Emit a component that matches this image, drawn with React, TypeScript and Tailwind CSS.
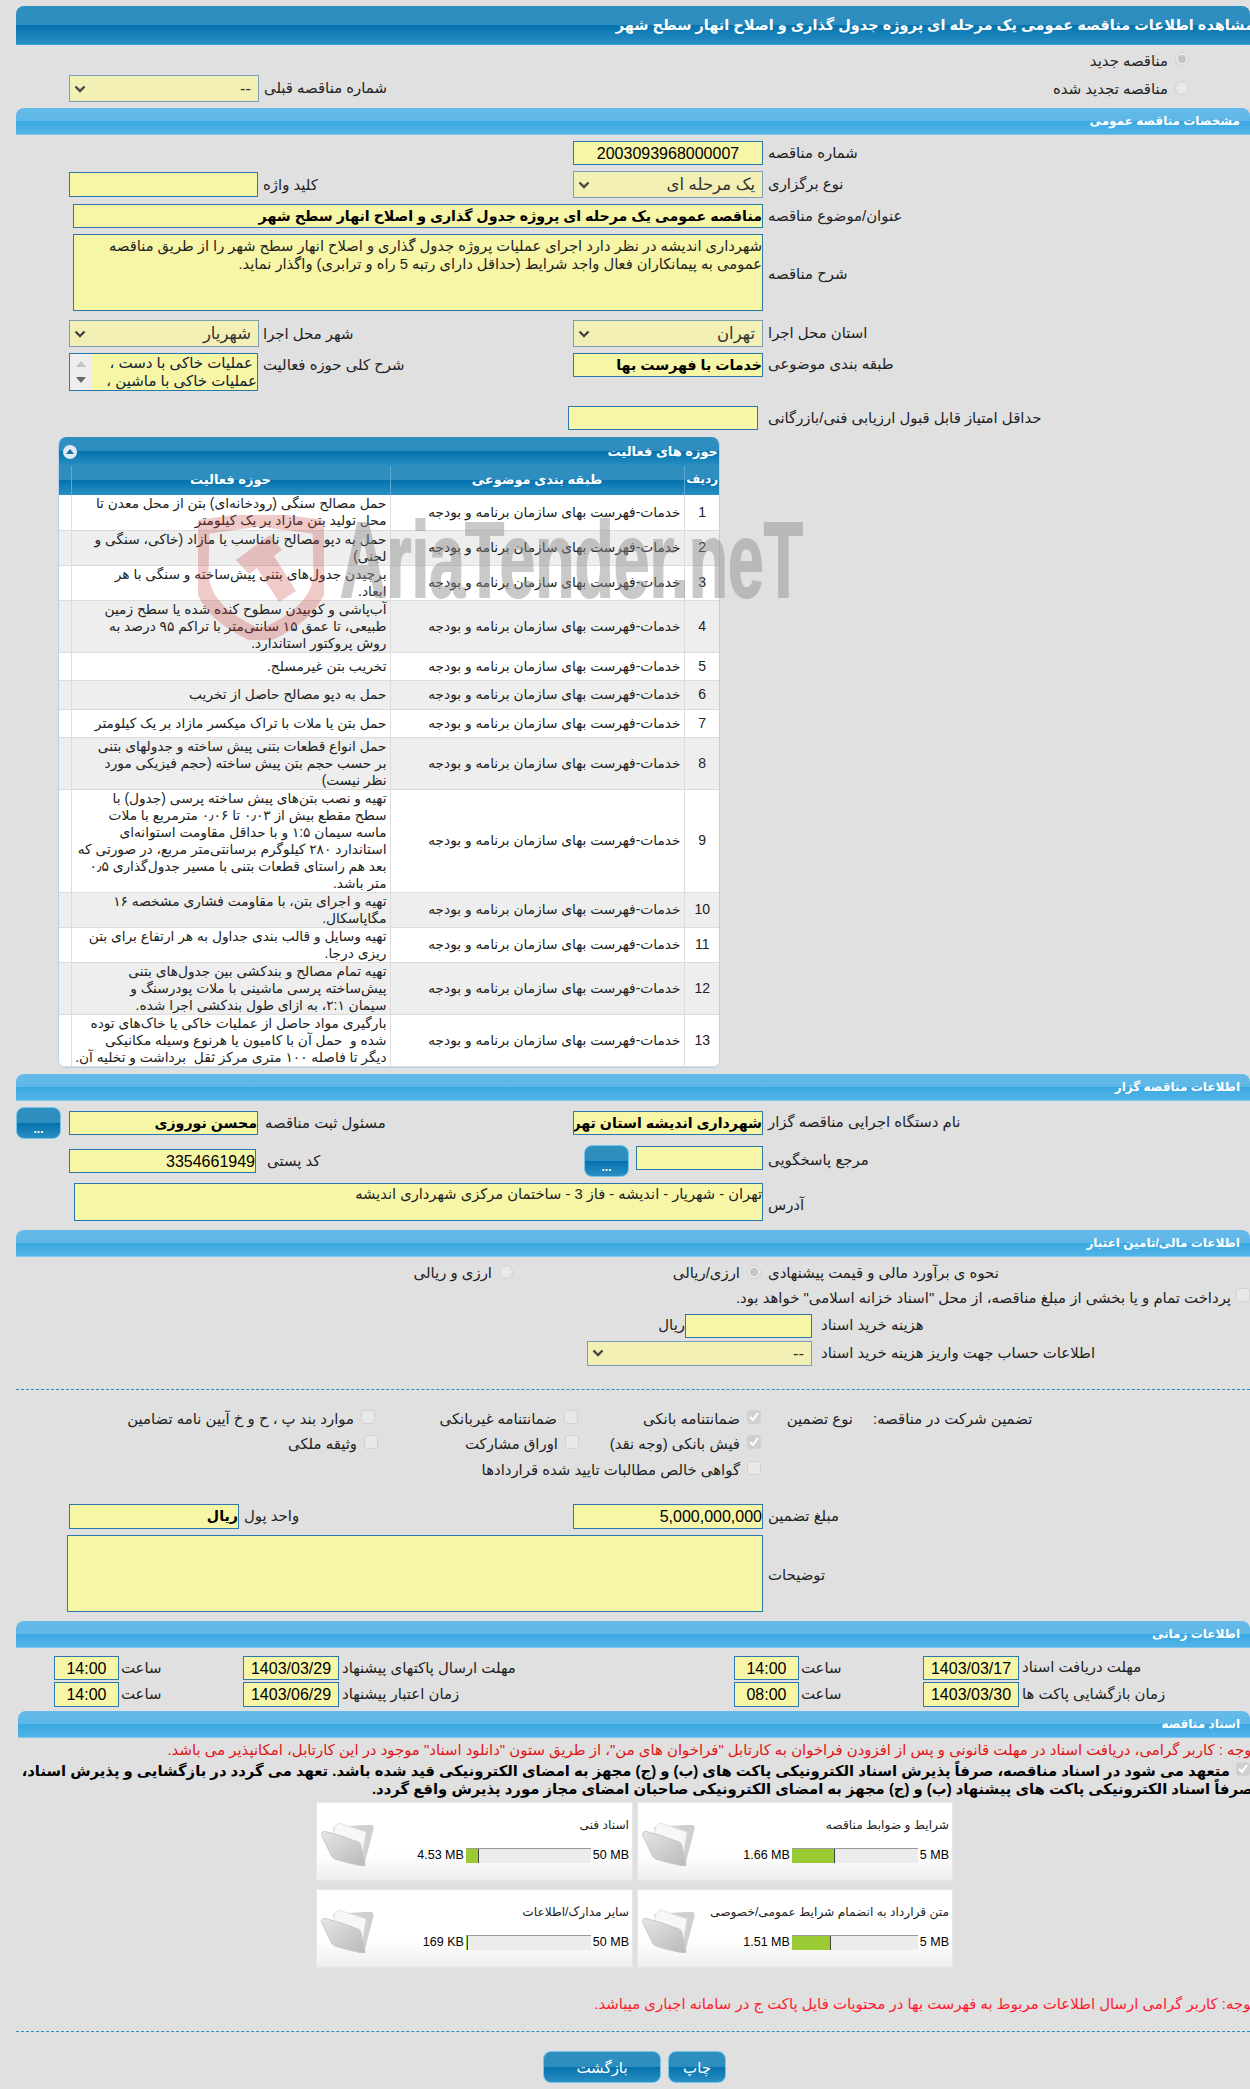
import type { ReactNode } from "react";

type ActivityRow = { id: number; lines: string[]; height: string };

const activityRows: ActivityRow[] = [
  { id: 1, height: "h-[35px]", lines: ["حمل مصالح سنگی (رودخانه‌ای) بتن از محل معدن تا", "محل تولید بتن مازاد بر یک کیلومتر"] },
  { id: 2, height: "h-[35px]", lines: ["حمل به دپو مصالح نامناسب یا مازاد (خاکی، سنگی و", "لجنی)"] },
  { id: 3, height: "h-[35px]", lines: ["برچیدن جدول‌های بتنی پیش‌ساخته و سنگی با هر", "ابعاد."] },
  { id: 4, height: "h-[52px]", lines: ["آب‌پاشی و کوبیدن سطوح کنده شده یا سطح زمین", "طبیعی، تا عمق ۱۵ سانتی‌متر با تراکم ۹۵ درصد به", "روش پروکتور استاندارد."] },
  { id: 5, height: "h-[28px]", lines: ["تخریب بتن غیرمسلح."] },
  { id: 6, height: "h-[29px]", lines: ["حمل به دپو مصالح حاصل از تخریب"] },
  { id: 7, height: "h-[28px]", lines: ["حمل بتن یا ملات با تراک میکسر مازاد بر یک کیلومتر"] },
  { id: 8, height: "h-[52px]", lines: ["حمل انواع قطعات بتنی پیش ساخته و جدولهای بتنی", "بر حسب حجم بتن پیش ساخته (حجم فیزیکی مورد", "نظر نیست)"] },
  { id: 9, height: "h-[103px]", lines: ["تهیه و نصب بتن‌های پیش ساخته پرسی (جدول) با", "سطح مقطع بیش از ۰٫۰۳ تا ۰٫۰۶ مترمربع با ملات", "ماسه سیمان ۱:۵ و با حداقل مقاومت استوانه‌ای", "استاندارد ۲۸۰ کیلوگرم برسانتی‌متر مربع، در صورتی که", "بعد هم راستای قطعات بتنی با مسیر جدول‌گذاری ۰٫۵", "متر باشد."] },
  { id: 10, height: "h-[35px]", lines: ["تهیه و اجرای بتن، با مقاومت فشاری مشخصه ۱۶", "مگاپاسکال."] },
  { id: 11, height: "h-[35px]", lines: ["تهیه وسایل و قالب بندی جداول به هر ارتفاع برای بتن", "ریزی درجا."] },
  { id: 12, height: "h-[52px]", lines: ["تهیه تمام مصالح و بندکشی بین جدول‌های بتنی", "پیش‌ساخته پرسی ماشینی با ملات پودرسنگ و", "سیمان ۲:۱، به ازای طول بندکشی اجرا شده."] },
  { id: 13, height: "h-[52px]", lines: ["بارگیری مواد حاصل از عملیات خاکی یا خاک‌های توده", "شده و  حمل آن با کامیون یا هرنوع وسیله مکانیکی", "دیگر تا فاصله ۱۰۰ متری مرکز ثقل  برداشت و تخلیه آن."] },
];

const lightBar = "bg-[linear-gradient(to_bottom,#64bbe9_0%,#5eb7e8_50%,#3aa8e2_50%,#52b4e7_100%)]";
const darkBar = "bg-[linear-gradient(to_bottom,#2f90c0_0%,#2c8dbe_50%,#0472ad_50%,#2a8fc4_100%)]";

function SectionBar({ title, className = "ml-4" }: { title: string; className?: string }) {
  return (
    <div dir="rtl" className={`${lightBar} ${className} h-[27px] rounded-t-[8px] border-b border-[#7cc8ef] pr-[10px] text-[12px] leading-[27px] font-bold text-white`}>
      {title}
    </div>
  );
}

function Field({ size, bold, center, children }: { size: string; bold?: boolean; center?: boolean; children?: ReactNode }) {
  return (
    <div
      dir="rtl"
      className={`${size} shrink-0 overflow-hidden border border-[#2a78ad] bg-[#f7f5a6] whitespace-nowrap text-black ${bold ? "text-[14.2px] leading-[23px] font-bold" : "text-[16px] leading-[24px]"} ${center ? "text-center" : "text-right"}`}
    >
      {children}
    </div>
  );
}

function SelectBox({ size, value }: { size: string; value?: string }) {
  return (
    <div dir="rtl" className={`${size} flex shrink-0 items-center justify-between border border-[#7d9db5] bg-[#f2f0b5] pr-[7px] pl-[4px] text-[16.5px] text-[#333]`}>
      <span>{value}</span>
      <svg width="12" height="8" viewBox="0 0 12 8" fill="none" stroke="#444" strokeWidth="2.4">
        <path d="M1.5 1.5 6 6l4.5-4.5" />
      </svg>
    </div>
  );
}

function Label({ children, className = "" }: { children: ReactNode; className?: string }) {
  return (
    <span dir="rtl" className={`${className} text-[14.9px] whitespace-nowrap text-[#222]`}>
      {children}
    </span>
  );
}

function Radio({ checked }: { checked?: boolean }) {
  return (
    <span className="ml-[3px] flex h-[14px] w-[14px] shrink-0 items-center justify-center rounded-full border border-[#cfcfcf] bg-[#e9e9e9]">
      {checked && <span className="h-[8px] w-[8px] rounded-full bg-[#c4c4c4]" />}
    </span>
  );
}

function Check({ checked }: { checked?: boolean }) {
  return (
    <span className={`ml-[3px] flex h-[14px] w-[14px] shrink-0 items-center justify-center rounded-[3px] border border-[#d2d2d2] ${checked ? "bg-[#d0d0d0]" : "bg-[#e8e8e8]"}`}>
      {checked && (
        <svg width="10" height="9" viewBox="0 0 10 9" fill="none" stroke="#fff" strokeWidth="2">
          <path d="M1 5l3 3 5-7" />
        </svg>
      )}
    </span>
  );
}

function CheckItem({ size, text, checked }: { size: string; text: string; checked?: boolean }) {
  return (
    <div className={`${size} flex shrink-0 items-start justify-end`}>
      <Label className="mt-[1px] mr-[4px] leading-[16px]">{text}</Label>
      <Check checked={checked} />
    </div>
  );
}

function BlueButton({ size, children }: { size: string; children: ReactNode }) {
  return (
    <div className={`${size} ${darkBar} flex shrink-0 items-end justify-center rounded-[8px] border border-[#76c6ea] pb-[4px] text-white`}>
      {children}
    </div>
  );
}

function FolderIcon() {
  return (
    <svg width="54" height="46" viewBox="0 0 54 46" className="mt-[17px] ml-[4px] shrink-0">
      <defs>
        <linearGradient id="folderFront" x1="0" y1="0" x2="1" y2="1">
          <stop offset="0" stopColor="#e6e6e6" />
          <stop offset="1" stopColor="#b9b9b9" />
        </linearGradient>
      </defs>
      <path d="M12 7 44 5 51 5c2 1 2 3 1 6L44 42 14 18Z" fill="#cfcfcf" />
      <path d="M13 9c2-5 5-7 8-5l24 8-4 24L13 18Z" fill="#f7f7f7" stroke="#e2e2e2" />
      <path d="M1 13c1-2 3-2 5-1l11 3c7 2 14 5 20 7 2 1 3 2 3 4l4 18c0 2-1 3-3 2-9-2-18-4-27-7-2-1-3-2-4-4L1 16c-1-1-1-2 0-3Z" fill="url(#folderFront)" stroke="#c8c8c8" />
    </svg>
  );
}

function DocCard({ title, value, max, fill, barWidth }: { title: string; value: string; max: string; fill: string; barWidth: string }) {
  return (
    <div className="flex h-[79px] border border-[#e6e6e6] bg-[linear-gradient(to_bottom,#ffffff_0%,#ffffff_65%,#eeeeee_100%)]">
      <FolderIcon />
      <div className="flex min-w-0 flex-1 flex-col">
        <div dir="rtl" className="mt-[13px] h-[18px] pr-[3px] text-[12.2px] leading-[18px] whitespace-nowrap text-[#222]">
          {title}
        </div>
        <div className="mt-[14px] flex items-center justify-end gap-[2px] pr-[3px] text-[12.5px] leading-[15px] text-black">
          <span className="[font-family:'Liberation_Sans',sans-serif] whitespace-nowrap">{value}</span>
          <div className={`${barWidth} flex h-[15px] shrink-0 border-t border-[#999] bg-[#ececec]`}>
            <div className={`${fill} h-full border-r border-[#444] bg-[#9acb34]`} />
          </div>
          <span className="[font-family:'Liberation_Sans',sans-serif] whitespace-nowrap">{max}</span>
        </div>
      </div>
    </div>
  );
}

function Watermark() {
  return (
    <div className="pointer-events-none absolute top-[515px] left-[198px] flex h-[125px] w-[610px]">
      <svg width="126" height="125" viewBox="0 0 126 125" fill="none" className="shrink-0">
        <path d="M4 12 62 4l60 8 1 50c-3 28-30 48-61 60C30 108 5 90 3 60Z" stroke="#c83c3c" strokeOpacity="0.28" strokeWidth="15" />
        <path d="M38 45 72 20l12 15-8 6 22 35-17 11-22-34-8 6Z" fill="#c83c3c" fillOpacity="0.28" />
      </svg>
      <span className="mt-[-18px] ml-[16px] origin-left scale-x-[0.595] text-[108px] leading-[125px] font-bold whitespace-nowrap text-[#8a8a8a] opacity-45 [-webkit-text-stroke:2px_#8a8a8a] [font-family:'Liberation_Sans',sans-serif]">
        AriaTender.neT
      </span>
    </div>
  );
}

export default function App() {
  return (
    <div className="relative h-[2089px] w-[1250px] overflow-hidden bg-[#e0e0e0] pt-[6px] [font-family:'Liberation_Sans','DejaVu_Sans',sans-serif] text-[#222]">
      <div dir="rtl" className={`${darkBar} ml-4 h-[39px] overflow-hidden rounded-t-[8px] border-b border-[#3a9fdf] text-[14.5px] leading-[38px] font-bold whitespace-nowrap text-white`}>
        <span className="mr-[-4px] inline-block">مشاهده اطلاعات مناقصه عمومی یک مرحله ای پروژه جدول گذاری و اصلاح انهار سطح شهر</span>
      </div>

      <div className="relative flex h-[63px] justify-between pl-[69px]">
        <div className="mt-[30px] flex h-[27px] items-center">
          <SelectBox size="w-[190px] h-[27px]" value="--" />
          <Label className="ml-[5px]">شماره مناقصه قبلی</Label>
        </div>
        <div className="mt-[7px] flex flex-col items-end gap-[15px] pr-[61px]">
          <div className="flex h-[14px] items-center">
            <Label className="mt-[4px] mr-[4px]">مناقصه جدید</Label>
            <Radio checked />
          </div>
          <div className="flex h-[14px] items-center">
            <Label className="mt-[3px] mr-[4px]">مناقصه تجدید شده</Label>
            <Radio />
          </div>
        </div>
      </div>

      <SectionBar title="مشخصات مناقصه عمومی" />

      <div className="mt-[6px] flex h-[24px] items-center pl-[573px]">
        <Field size="w-[190px] h-[24px]" center>
          2003093968000007
        </Field>
        <Label className="ml-[5px]">شماره مناقصه</Label>
      </div>

      <div className="mt-[6px] flex h-[27px] items-center pl-[69px]">
        <Field size="w-[189px] h-[25px]" />
        <div className="w-[315px] pl-[5px]">
          <Label>کلید واژه</Label>
        </div>
        <SelectBox size="w-[190px] h-[27px]" value="یک مرحله ای" />
        <Label className="ml-[5px]">نوع برگزاری</Label>
      </div>

      <div className="mt-[6px] flex h-[24px] items-center pl-[73px]">
        <Field size="w-[690px] h-[24px]" bold>
          مناقصه عمومی یک مرحله ای پروژه جدول گذاری و اصلاح انهار سطح شهر
        </Field>
        <Label className="ml-[5px]">عنوان/موضوع مناقصه</Label>
      </div>

      <div className="mt-[6px] flex h-[77px] items-center pl-[73px]">
        <div dir="rtl" className="h-[77px] w-[690px] shrink-0 border border-[#2a78ad] bg-[#f7f5a6] pt-[2px] text-[14.7px] leading-[18px] text-[#222]">
          شهرداری اندیشه در نظر دارد اجرای عملیات پروژه جدول گذاری و اصلاح انهار سطح شهر را از طریق مناقصه
          <br />
          عمومی به پیمانکاران فعال واجد شرایط (حداقل دارای رتبه 5 راه و ترابری) واگذار نماید.
        </div>
        <Label className="mt-[3px] ml-[5px]">شرح مناقصه</Label>
      </div>

      <div className="mt-[9px] flex h-[27px] items-center pl-[69px]">
        <SelectBox size="w-[190px] h-[27px]" value="شهریار" />
        <div className="w-[314px] pl-[4px]">
          <Label>شهر محل اجرا</Label>
        </div>
        <SelectBox size="w-[190px] h-[27px]" value="تهران" />
        <Label className="ml-[5px]">استان محل اجرا</Label>
      </div>

      <div className="mt-[6px] flex h-[38px] items-start pl-[69px]">
        <div className="flex h-[38px] w-[189px] shrink-0 border border-[#2a78ad] bg-[#f7f5a6]">
          <div className="flex h-full w-[21px] shrink-0 flex-col items-center justify-around bg-[#eeeeee] py-[2px]">
            <span className="h-0 w-0 border-x-[5px] border-b-[6px] border-x-transparent border-b-[#c4c4c4]" />
            <span className="h-0 w-0 border-x-[5px] border-t-[6px] border-x-transparent border-t-[#666]" />
          </div>
          <div dir="rtl" className="flex-1 overflow-hidden text-[15px] leading-[18px] whitespace-nowrap text-[#123]">
            <div className="pr-[4px]">عملیات خاکی با دست ،</div>
            <div>عملیات خاکی با ماشین ،</div>
          </div>
        </div>
        <div className="w-[315px] pl-[5px]">
          <Label>شرح کلی حوزه فعالیت</Label>
        </div>
        <Field size="w-[190px] h-[24px]" bold>
          خدمات با فهرست بها
        </Field>
        <Label className="ml-[5px]">طبقه بندی موضوعی</Label>
      </div>

      <div className="mt-[15px] flex h-[24px] items-center pl-[568px]">
        <Field size="w-[190px] h-[24px]" />
        <Label className="ml-[10px]">حداقل امتیاز قابل قبول ارزیابی فنی/بازرگانی</Label>
      </div>

      <div className="mt-[7px] ml-[58px] w-[662px] overflow-hidden rounded-t-[8px] rounded-b-[8px] border-x border-b border-[#b5d2e8] bg-white">
        <div dir="rtl" className={`${darkBar} flex h-[29px] items-center justify-between pr-[1px] pl-[4px] text-[13px] font-bold text-white`}>
          <span>حوزه های فعالیت</span>
          <span className="flex h-[14px] w-[14px] items-center justify-center rounded-full bg-[#dfe9f3]">
            <span className="h-0 w-0 border-x-[4px] border-b-[5px] border-x-transparent border-b-[#1b6f9f]" />
          </span>
        </div>
        <table dir="rtl" className="w-full table-fixed border-collapse text-[13.75px] leading-[17px] text-[#222]">
          <colgroup>
            <col className="w-[36px]" />
            <col className="w-[294px]" />
            <col className="w-[319px]" />
            <col className="w-[12px]" />
          </colgroup>
          <thead>
            <tr className={`${darkBar} h-[29px] text-[13px] font-bold text-white`}>
              <th className="border-l border-[#5aa9d4] pb-[3px] text-[12px] font-bold whitespace-nowrap">ردیف</th>
              <th className="border-l border-[#5aa9d4] pb-[3px] font-bold">طبقه بندی موضوعی</th>
              <th className="border-l border-[#5aa9d4] pb-[3px] font-bold">حوزه فعالیت</th>
              <th />
            </tr>
          </thead>
          <tbody>
            {activityRows.map((row) => (
              <tr key={row.id} className={`${row.height} border-b border-[#dcdcdc] ${row.id % 2 === 0 ? "bg-[#eeeeee]" : "bg-white"}`}>
                <td className="border-l border-[#dcdcdc] text-center text-[14px] [font-family:'Liberation_Sans',sans-serif]">{row.id}</td>
                <td className="border-l border-[#dcdcdc] pr-[3px] whitespace-nowrap">خدمات-فهرست بهای سازمان برنامه و بودجه</td>
                <td className="border-l border-[#dcdcdc] pr-[3px] whitespace-pre">
                  {row.lines.map((line) => (
                    <div key={line}>{line}</div>
                  ))}
                </td>
                <td />
              </tr>
            ))}
          </tbody>
        </table>
      </div>

      <div className="mt-[6px]">
        <SectionBar title="اطلاعات مناقصه گزار" />
      </div>

      <div className="mt-[6px] flex h-[32px] items-center pl-[16px]">
        <BlueButton size="w-[45px] h-[32px] text-[12px] leading-[10px] font-bold">...</BlueButton>
        <div className="ml-[8px]">
          <Field size="w-[189px] h-[24px]" bold>
            محسن نوروزی
          </Field>
        </div>
        <div className="w-[315px] pl-[7px]">
          <Label>مسئول ثبت مناقصه</Label>
        </div>
        <Field size="w-[190px] h-[24px]" bold>
          شهرداری اندیشه استان تهران
        </Field>
        <Label className="ml-[5px]">نام دستگاه اجرایی مناقصه گزار</Label>
      </div>

      <div className="mt-[6px] flex h-[32px] items-center pl-[69px]">
        <Field size="w-[187px] h-[24px]">3354661949</Field>
        <div className="w-[328px] pl-[11px]">
          <Label>کد پستی</Label>
        </div>
        <BlueButton size="w-[45px] h-[32px] text-[12px] leading-[10px] font-bold">...</BlueButton>
        <div className="mb-[6px] ml-[7px]">
          <Field size="w-[127px] h-[24px]" />
        </div>
        <Label className="ml-[5px]">مرجع پاسخگویی</Label>
      </div>

      <div className="mt-[6px] flex h-[38px] items-center pl-[74px]">
        <div dir="rtl" className="h-[38px] w-[689px] shrink-0 border border-[#2a78ad] bg-[#f7f5a6] pt-[1px] text-[14.7px] leading-[18px] text-[#222]">
          تهران - شهریار - اندیشه - فاز 3 - ساختمان مرکزی شهرداری اندیشه
        </div>
        <Label className="mt-[8px] ml-[5px]">آدرس</Label>
      </div>

      <div className="mt-[9px]">
        <SectionBar title="اطلاعات مالی/تامین اعتبار" />
      </div>

      <div className="mt-[8px] flex h-[14px] items-center">
        <div className="flex w-[513px] shrink-0 items-center justify-end">
          <Label className="mt-[3px] mr-[4px]">ارزی و ریالی</Label>
          <Radio />
        </div>
        <div className="flex w-[248px] shrink-0 items-center justify-end">
          <Label className="mt-[3px] mr-[4px]">ارزی/ریالی</Label>
          <Radio checked />
        </div>
        <Label className="mt-[3px] ml-[7px]">نحوه ی برآورد مالی و قیمت پیشنهادی</Label>
      </div>

      <div className="mt-[9px] flex h-[14px] items-center justify-end">
        <Label className="mt-[8px] mr-[2px]">پرداخت تمام و یا بخشی از مبلغ مناقصه، از محل "اسناد خزانه اسلامی" خواهد بود.</Label>
        <Check />
      </div>

      <div className="mt-[12px] flex h-[24px] items-center">
        <div className="flex w-[685px] shrink-0 justify-end">
          <Label>ریال</Label>
        </div>
        <Field size="w-[127px] h-[24px]" />
        <Label className="ml-[9px]">هزینه خرید اسناد</Label>
      </div>

      <div className="mt-[3px] flex h-[25px] items-center pl-[587px]">
        <SelectBox size="w-[225px] h-[25px]" value="--" />
        <Label className="ml-[9px]">اطلاعات حساب جهت واریز هزینه خرید اسناد</Label>
      </div>

      <div className="mt-[23px] ml-4 border-t border-dashed border-[#2a8fc4]" />

      <div className="mt-[20px] flex h-[14px] items-start">
        <CheckItem size="w-[375px]" text="موارد بند پ ، ح و خ آیین نامه تضامین" />
        <CheckItem size="w-[203px]" text="ضمانتنامه غیربانکی" />
        <CheckItem size="w-[183px]" text="ضمانتنامه بانکی" checked />
        <div className="flex w-[92px] shrink-0 justify-end">
          <Label className="mt-[1px] leading-[16px]">نوع تضمین</Label>
        </div>
        <Label className="mt-[1px] ml-[20px] leading-[16px]">تضمین شرکت در مناقصه:</Label>
      </div>

      <div className="mt-[11px] flex h-[14px] items-start">
        <CheckItem size="w-[378px]" text="وثیقه ملکی" />
        <CheckItem size="w-[201px]" text="اوراق مشارکت" />
        <CheckItem size="w-[182px]" text="فیش بانکی (وجه نقد)" checked />
      </div>

      <div className="mt-[12px] flex h-[14px] items-start pl-[400px]">
        <CheckItem size="w-[361px]" text="گواهی خالص مطالبات تایید شده قراردادها" />
      </div>

      <div className="mt-[29px] flex h-[25px] items-center pl-[69px]">
        <Field size="w-[170px] h-[25px]" bold>
          ریال
        </Field>
        <div className="w-[334px] pl-[5px]">
          <Label>واحد پول</Label>
        </div>
        <Field size="w-[190px] h-[25px]">5,000,000,000</Field>
        <Label className="ml-[5px]">مبلغ تضمین</Label>
      </div>

      <div className="mt-[6px] flex h-[77px] items-center pl-[67px]">
        <Field size="w-[696px] h-[77px]" />
        <Label className="mt-[5px] ml-[5px]">توضیحات</Label>
      </div>

      <div className="mt-[9px]">
        <SectionBar title="اطلاعات زمانی" />
      </div>

      <div className="mt-[8px] flex h-[24px] items-center pl-[54px]">
        <Field size="w-[65px] h-[24px]" center>14:00</Field>
        <div className="w-[124px] pl-[2px]"><Label>ساعت</Label></div>
        <Field size="w-[96px] h-[24px]" center>1403/03/29</Field>
        <div className="w-[395px] pl-[3px]"><Label>مهلت ارسال پاکتهای پیشنهاد</Label></div>
        <Field size="w-[65px] h-[24px]" center>14:00</Field>
        <div className="w-[124px] pl-[2px]"><Label>ساعت</Label></div>
        <Field size="w-[96px] h-[24px]" center>1403/03/17</Field>
        <Label className="ml-[3px]">مهلت دریافت اسناد</Label>
      </div>

      <div className="mt-[2px] flex h-[25px] items-center pl-[54px]">
        <Field size="w-[65px] h-[25px]" center>14:00</Field>
        <div className="w-[124px] pl-[2px]"><Label>ساعت</Label></div>
        <Field size="w-[96px] h-[25px]" center>1403/06/29</Field>
        <div className="w-[395px] pl-[3px]"><Label>زمان اعتبار پیشنهاد</Label></div>
        <Field size="w-[65px] h-[25px]" center>08:00</Field>
        <div className="w-[124px] pl-[2px]"><Label>ساعت</Label></div>
        <Field size="w-[96px] h-[25px]" center>1403/03/30</Field>
        <Label className="ml-[3px]">زمان بازگشایی پاکت ها</Label>
      </div>

      <div className="mt-[4px]">
        <SectionBar title="اسناد مناقصه" className="ml-[18px]" />
      </div>

      <div dir="rtl" className="mt-[3px] mr-[-6px] h-[18px] text-[14.9px] leading-[18px] whitespace-nowrap text-[#e01414]">
        توجه : کاربر گرامی، دریافت اسناد در مهلت قانونی و پس از افزودن فراخوان به کارتابل "فراخوان های من"، از طریق ستون "دانلود اسناد" موجود در این کارتابل، امکانپذیر می باشد.
      </div>
      <div className="mt-[3px] flex h-[18px] items-start justify-end">
        <span dir="rtl" className="mr-[3px] text-[14.8px] leading-[18px] font-bold whitespace-nowrap text-black">
          متعهد می شود در اسناد مناقصه، صرفاً پذیرش اسناد الکترونیکی پاکت های (ب) و (ج) مجهز به امضای الکترونیکی قید شده باشد. تعهد می گردد در بازگشایی و پذیرش اسناد،
        </span>
        <Check checked />
      </div>
      <div dir="rtl" className="mr-[-3px] h-[18px] text-[14.8px] leading-[18px] font-bold whitespace-nowrap text-black">
        صرفاً اسناد الکترونیکی پاکت های پیشنهاد (ب) و (ج) مجهز به امضای الکترونیکی صاحبان امضای مجاز مورد پذیرش واقع گردد.
      </div>

      <div className="mt-[4px] ml-[316px] grid w-[637px] grid-cols-[317px_316px] gap-x-[4px] gap-y-[8px]">
        <DocCard title="اسناد فنی" value="4.53 MB" max="50 MB" fill="w-[13px]" barWidth="w-[125px]" />
        <DocCard title="شرایط و ضوابط مناقصه" value="1.66 MB" max="5 MB" fill="w-[43px]" barWidth="w-[126px]" />
        <DocCard title="سایر مدارک/اطلاعات" value="169 KB" max="50 MB" fill="w-[2px]" barWidth="w-[125px]" />
        <DocCard title="متن قرارداد به انضمام شرایط عمومی/خصوصی" value="1.51 MB" max="5 MB" fill="w-[39px]" barWidth="w-[126px]" />
      </div>

      <div dir="rtl" className="mt-[27px] mr-[-5px] h-[18px] text-[14.9px] leading-[18px] whitespace-nowrap text-[#ff1a2e]">
        توجه: کاربر گرامی ارسال اطلاعات مربوط به فهرست بها در محتویات فایل پاکت ج در سامانه اجباری میباشد.
      </div>

      <div className="mt-[18px] ml-4 border-t border-dashed border-[#2a8fc4]" />

      <div className="mt-[19px] flex h-[32px] gap-[7px] pl-[543px] text-[15px] leading-[20px]">
        <BlueButton size="w-[118px] h-[32px]">بازگشت</BlueButton>
        <BlueButton size="w-[58px] h-[32px]">چاپ</BlueButton>
      </div>

      <Watermark />
    </div>
  );
}
